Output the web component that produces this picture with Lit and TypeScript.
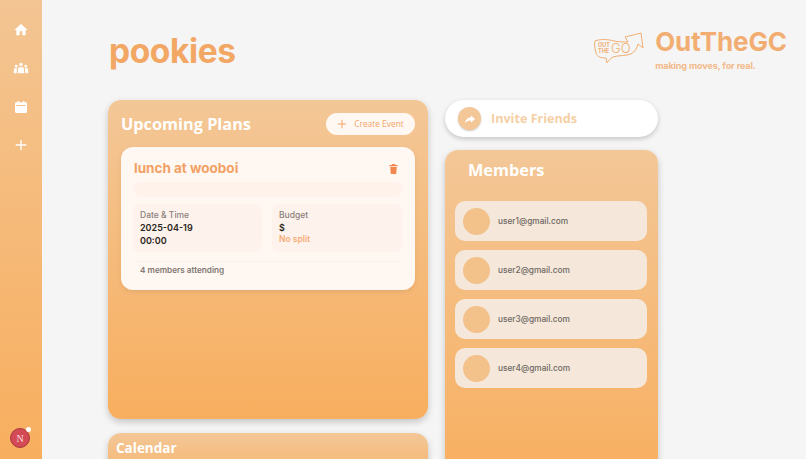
import { LitElement, html, css, svg } from "lit";
import { customElement } from "lit/decorators.js";

const members = ["user1@gmail.com", "user2@gmail.com", "user3@gmail.com", "user4@gmail.com"];

@customElement("app-root")
export class AppRoot extends LitElement {
  static styles = css`
    :host { display: block; width: 806px; height: 459px; overflow: hidden; background: #f5f5f5; font-family: "Inter", "Open Sans", sans-serif; }
    * { box-sizing: border-box; }
    .page { display: flex; height: 459px; overflow: hidden; }
    .rail { width: 42px; height: 459px; flex: none; background: linear-gradient(180deg, #f3c593 0%, #f8ae5e 100%); display: flex; flex-direction: column; align-items: center; padding-top: 22px; }
    .rail svg.nav { width: 16px; height: 16px; margin-bottom: 22.3px; display: block; fill: #fff; }
    .badge { margin-top: auto; margin-bottom: 11px; margin-right: 2px; width: 20px; height: 20px; border-radius: 50%; background: #d34a56; border: 1px solid #a83a3a; color: #f8dfe0; font: 500 10px "Liberation Serif", serif; display: flex; align-items: center; justify-content: center; position: relative; }
    .badge::after { content: ""; position: absolute; width: 5px; height: 5px; border-radius: 50%; background: #fff; top: -2px; right: -2px; }
    .main { flex: 1; min-width: 0; padding: 0 19px 0 66px; }
    .head { height: 100px; display: flex; justify-content: space-between; }
    h1 { margin: 29px 0 0 1px; font: 700 33.5px/44px "Inter", sans-serif; letter-spacing: -0.4px; color: #f2a765; }
    .brand { display: flex; gap: 11px; padding-top: 28px; }
    .logo { width: 51px; height: 33px; margin-top: 4px; }
    .brand-name { font: 700 26px/28px "Inter", sans-serif; letter-spacing: -0.1px; color: #f2ae72; }
    .brand-tag { font: 700 9px/12px "Inter", sans-serif; letter-spacing: -0.1px; color: #f3b98a; margin-top: 4px; }
    .cols { display: flex; gap: 17px; align-items: flex-start; }
    .left { width: 320px; flex: none; display: flex; flex-direction: column; gap: 14px; }
    .right { width: 213px; flex: none; display: flex; flex-direction: column; gap: 13px; }
    .panel { background: linear-gradient(180deg, #f3c797 0%, #f8ae5e 100%); border-radius: 13px; box-shadow: 0 3px 7px rgba(0,0,0,.2); }
    .plans { height: 319px; padding: 12px 13px 0; }
    .plans-head { display: flex; justify-content: space-between; align-items: center; height: 23px; margin-bottom: 12px; }
    h2 { margin: 0; font: 700 16.3px/24px "Open Sans", sans-serif; color: #fff; }
    .create { width: 89px; height: 22px; border-radius: 11px; background: #fff8f2; color: #f2a56b; font: 400 8.4px/22px "Open Sans", sans-serif; display: flex; align-items: center; justify-content: center; gap: 7px; }
    .create svg { width: 10px; height: 10px; }
    .event { height: 143px; border-radius: 12px; background: #fff7f1; box-shadow: 0 2px 5px rgba(0,0,0,.08); padding: 13px 13px 0; }
    .event-head { display: flex; justify-content: space-between; align-items: center; height: 17px; margin-bottom: 5px; }
    h3 { margin: 0; font: 700 13.5px/17px "Inter", sans-serif; color: #f2a165; }
    .event-head svg { width: 11px; height: 12px; margin-right: 3px; }
    .desc { height: 15px; border-radius: 7px; background: #fef2ea; margin-bottom: 7px; }
    .facts { display: grid; grid-template-columns: 129px 130px; gap: 10px; height: 48px; margin-left: -1px; }
    .fact { background: #fef3ec; border-radius: 6px; padding: 6px 6px 0 7px; }
    .fact small { display: block; font: 500 8.5px/11px "Inter", sans-serif; color: #88807c; }
    .fact b { display: block; font: 600 9px/13px "Inter", sans-serif; color: #2a2521; }
    .fact i { display: block; font: 600 8.5px/9px "Inter", sans-serif; font-style: normal; color: #f7ab78; margin-top: 1px; }
    .attending { margin-top: 9px; padding: 3px 6px 0; border-top: 1px solid #fbf0e8; font: 600 8.2px/11px "Inter", sans-serif; color: #7f7873; }
    .calendar { height: 60px; padding: 5px 8px; }
    .calendar h2 { font-size: 13.5px; line-height: 20px; }
    .invite { height: 37px; border-radius: 19px; background: #fff; box-shadow: 0 2px 5px rgba(0,0,0,.2); display: flex; align-items: center; gap: 10px; padding-left: 13px; color: #f6cfa5; font: 700 12.6px "Open Sans", sans-serif; }
    .invite span { width: 23px; height: 23px; border-radius: 50%; background: #f3c797; box-shadow: 0 1px 2px rgba(0,0,0,.2); display: flex; align-items: center; justify-content: center; }
    .invite svg { width: 12px; height: 12px; fill: #fff; }
    .members { height: 340px; padding: 8px 11px 0 10px; }
    .members h2 { margin-left: 13px; line-height: 24px; height: 43px; }
    .member { height: 40px; background: #f5e7da; border-radius: 10px; margin-bottom: 9px; padding-left: 8px; display: flex; align-items: center; gap: 8px; font: 500 8.3px "Inter", sans-serif; color: #6d6762; padding-bottom: 1px; }
    .member span { width: 27px; height: 27px; border-radius: 50%; background: #f3c18a; flex: none; margin-top: 1px; }
  `;

  render() {
    return html`<div class="page">
      <nav class="rail">
        <svg class="nav" viewBox="0 0 24 24"><path d="M10 20v-6h4v6h5v-8h3L12 3 2 12h3v8z"/></svg>
        <svg class="nav" viewBox="0 0 24 24"><path d="M12 4a2.6 2.6 0 1 1 0 5.2A2.6 2.6 0 0 1 12 4zM4.8 7a2.2 2.2 0 1 1 0 4.4 2.2 2.2 0 0 1 0-4.4zm14.4 0a2.2 2.2 0 1 1 0 4.4 2.2 2.2 0 0 1 0-4.4zM8 11h8l1 9H7zM1.5 12.5h4.8L5.5 20H1zm16.2 0h4.8L23 20h-4.5z"/></svg>
        <svg class="nav" viewBox="0 0 24 24"><path d="M7 3h2v2h6V3h2v2h2a2 2 0 0 1 2 2v12a2 2 0 0 1-2 2H5a2 2 0 0 1-2-2V7a2 2 0 0 1 2-2h2zM5 9v1.5h14V9z"/></svg>
        <svg class="nav" viewBox="0 0 24 24"><path d="M20 13h-7v7h-2v-7H4v-2h7V4h2v7h7z"/></svg>
        <div class="badge">N</div>
      </nav>
      <main class="main">
        <header class="head">
          <h1>pookies</h1>
          <div class="brand">
            <svg class="logo" viewBox="0 0 51 33" fill="none" stroke="#f2ae72" stroke-width="1" stroke-linejoin="round">
              <path d="M2 9 C7 7 14 7 21 9 C25 10 30 10 35 10 L32 5 L48 1 L50 16 L45 12 C44 16 42 20 38 22 C33 24 26 23 20 25 C18 26 16 28 14 31 L13 26 C8 26 4 25 3 21 C2 17 1 13 2 9 Z"/>
              ${svg`<text x="5" y="14.5" font-family="Inter" font-size="5.5" font-weight="700" fill="#f2ae72" stroke="none">OUT</text>
              <text x="5" y="21" font-family="Inter" font-size="5.5" font-weight="700" fill="#f2ae72" stroke="none">THE</text>
              <text x="18" y="21" font-family="Inter" font-size="13" font-weight="300" fill="#f2ae72" stroke="none">GO</text>`}
            </svg>
            <div>
              <div class="brand-name">OutTheGC</div>
              <div class="brand-tag">making moves, for real.</div>
            </div>
          </div>
        </header>
        <div class="cols">
          <div class="left">
            <section class="panel plans">
              <div class="plans-head">
                <h2>Upcoming Plans</h2>
                <div class="create">
                  <svg viewBox="0 0 24 24" fill="#f2a56b"><path d="M22 13.2h-8.8V22h-2.4v-8.8H2v-2.4h8.8V2h2.4v8.8H22z"/></svg>
                  Create Event
                </div>
              </div>
              <article class="event">
                <div class="event-head">
                  <h3>lunch at wooboi</h3>
                  <svg viewBox="0 0 24 24" fill="#f2884f" preserveAspectRatio="none"><path d="M9 2h6l1 2h5v2.5H3V4h5zM5 8h14l-1 14H6z"/></svg>
                </div>
                <div class="desc"></div>
                <div class="facts">
                  <div class="fact"><small>Date &amp; Time</small><b>2025-04-19</b><b>00:00</b></div>
                  <div class="fact"><small>Budget</small><b>$</b><i>No split</i></div>
                </div>
                <div class="attending">4 members attending</div>
              </article>
            </section>
            <section class="panel calendar"><h2>Calendar</h2></section>
          </div>
          <div class="right">
            <div class="invite">
              <span><svg viewBox="0 0 24 24"><path d="M14 5l8 7-8 7v-4.2c-5.5 0-9 1.6-12 5.2 1-5.5 4.5-10.5 12-11.5z"/></svg></span>
              Invite Friends
            </div>
            <section class="panel members">
              <h2>Members</h2>
              ${members.map((m) => html`<div class="member"><span></span>${m}</div>`)}
            </section>
          </div>
        </div>
      </main>
    </div>`;
  }
}
